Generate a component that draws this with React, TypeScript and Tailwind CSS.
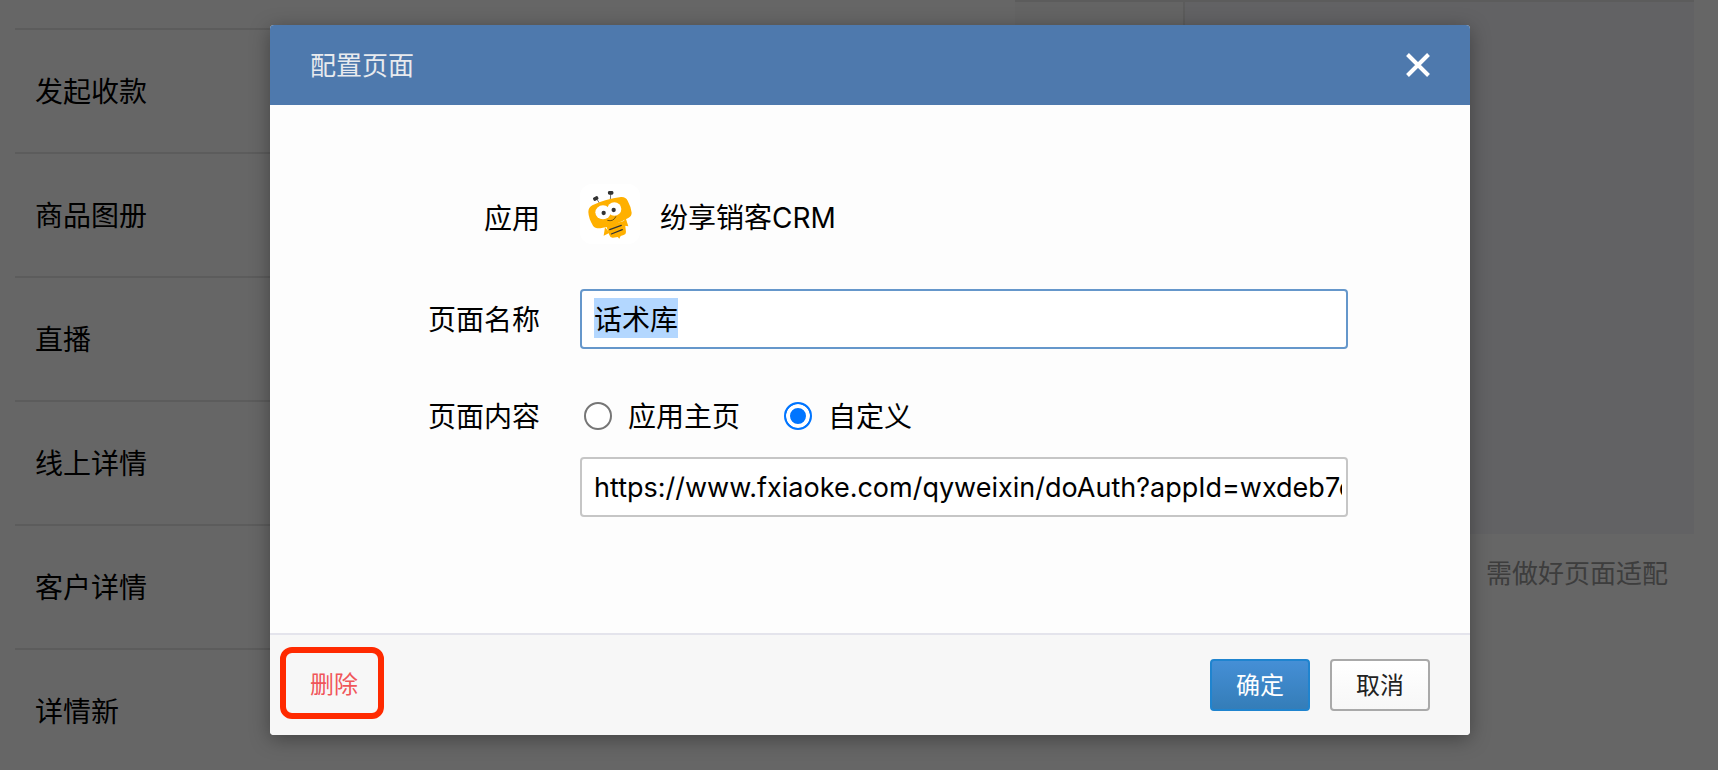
import React, { useEffect, useRef, useState } from "react";

const pages = ["发起收款", "商品图册", "直播", "线上详情", "客户详情", "详情新"];

const BeeLogo: React.FC = () => (
  <svg viewBox="15 12 180 180" className="w-15 h-15 rounded-xl bg-white" aria-hidden="true">
    <g stroke="#555" strokeWidth="2.5" fill="none">
      <path d="M66 58 L75 72" />
      <path d="M107 42 L106 60" />
    </g>
    <rect x="54" y="50" width="16" height="11" rx="4" fill="#333" transform="rotate(-28 62 55)" />
    <rect x="99" y="33" width="16" height="11" rx="4" fill="#333" />
    <path d="M90 142 L86 167 L104 158 Z" fill="#ffb000" />
    <path d="M146 124 L148 137 L160 139 L152 114 Z" fill="#ffb000" />
    <path
      d="M94 138 L149 122 L153 156 Q153 163 146 165 L137 168 L133 176 L128 171 L114 173 Q106 174 103 165 Z"
      fill="#ffb000"
    />
    <path
      d="M52 76 Q92 56 138 51 Q152 50 158 62 Q168 80 170 98 Q170 108 161 113 Q122 136 76 145 Q60 146 54 137 Q41 116 40 96 Q40 82 52 76 Z"
      fill="#ffb000"
    />
    <ellipse cx="84" cy="97" rx="23" ry="21" fill="#fff" />
    <ellipse cx="118" cy="87" rx="21" ry="20" fill="#fff" />
    <circle cx="86" cy="99" r="6.5" fill="#333" />
    <circle cx="116" cy="90" r="6.5" fill="#333" />
    <path d="M97 121 Q115 126 123 109" stroke="#4a3a10" strokeWidth="2.5" fill="none" />
    <g stroke="#333" strokeWidth="3.5" strokeLinecap="round">
      <path d="M104 149 L139 136" />
      <path d="M109 162 L142 149" />
    </g>
  </svg>
);

const App: React.FC = () => {
  const [name, setName] = useState("话术库");
  const [url, setUrl] = useState(
    "https://www.fxiaoke.com/qyweixin/doAuth?appId=wxdeb7c"
  );
  const [content, setContent] = useState("custom");
  const nameRef = useRef<HTMLInputElement>(null);

  useEffect(() => {
    nameRef.current?.focus();
    nameRef.current?.select();
  }, []);

  return (
    <div className="relative h-screen overflow-hidden bg-white text-black text-[28px] leading-9 font-['Inter','Noto_Sans_CJK_SC',sans-serif]">
      <div className="flex justify-between pl-[15px] pr-6">
        <ul className="w-1/2 pt-7">
          {pages.map((page) => (
            <li
              key={page}
              className="h-[124px] flex items-center border-t-2 border-[#e6e6e6] pl-5 pt-0.5"
            >
              {page}
            </li>
          ))}
        </ul>
        <div className="w-[679px]">
          <div className="h-[534px] flex border-t-2 border-[#e6e6e6]">
            <div className="w-[168px] bg-[#fafafa]" />
            <div className="flex-1 border-l-2 border-[#e6e6e6] bg-[#f4f6fa]" />
          </div>
          <p className="mt-[22px] pr-[26px] text-right text-[26px] text-[#999]">
            需做好页面适配
          </p>
        </div>
      </div>

      <div className="absolute inset-0 flex justify-center items-start bg-black/60 pt-[25px] pl-[22px]">
        <div
          role="dialog"
          aria-labelledby="dialog-title"
          className="w-full max-w-[1200px] rounded-sm bg-[#fdfdfd] overflow-hidden shadow-[0_4px_20px_rgba(0,0,0,0.35)]"
        >
          <header className="h-20 flex items-center justify-between bg-[#4e79ad] px-10">
            <h1 id="dialog-title" className="pt-0.5 text-[26px] text-[#e8eaee]">
              配置页面
            </h1>
            <button type="button" aria-label="关闭" className="text-white">
              <svg viewBox="0 0 24 24" className="w-6 h-6" stroke="currentColor" strokeWidth="4">
                <path d="M1.5 1.5 L22.5 22.5 M22.5 1.5 L1.5 22.5" />
              </svg>
            </button>
          </header>

          <form className="h-[528px] pt-[79px] pr-[122px]">
            <div className="flex items-center gap-10">
              <span className="w-[270px] pt-2.5 text-right">应用</span>
              <div className="flex items-center gap-5">
                <BeeLogo />
                <span className="pt-2">纷享销客CRM</span>
              </div>
            </div>

            <div className="mt-[45px] flex items-center gap-10">
              <label htmlFor="page-name" className="w-[270px] pt-0.5 text-right">
                页面名称
              </label>
              <input
                id="page-name"
                ref={nameRef}
                type="text"
                value={name}
                onChange={(e) => setName(e.target.value)}
                className="flex-1 min-w-0 h-15 px-3 pb-0.5 rounded-sm border-2 border-[#6597cb] bg-white outline-none selection:bg-[#b3d7ff] selection:text-black"
              />
            </div>

            <div className="mt-12 flex gap-10">
              <span id="content-label" className="w-[270px] pt-0.5 text-right">
                页面内容
              </span>
              <div className="flex-1 min-w-0">
                <div
                  role="radiogroup"
                  aria-labelledby="content-label"
                  className="flex gap-11 pl-1"
                >
                  <label className="flex items-center gap-4">
                    <input
                      type="radio"
                      name="content"
                      checked={content === "home"}
                      onChange={() => setContent("home")}
                      className="appearance-none w-7 h-7 rounded-full border-2 border-[#767676] bg-white checked:border-[#0075ff] checked:bg-[#0075ff] checked:shadow-[inset_0_0_0_4px_white]"
                    />
                    <span className="pt-0.5">应用主页</span>
                  </label>
                  <label className="flex items-center gap-4">
                    <input
                      type="radio"
                      name="content"
                      checked={content === "custom"}
                      onChange={() => setContent("custom")}
                      className="appearance-none w-7 h-7 rounded-full border-2 border-[#767676] bg-white checked:border-[#0075ff] checked:bg-[#0075ff] checked:shadow-[inset_0_0_0_4px_white]"
                    />
                    <span className="pt-0.5">自定义</span>
                  </label>
                </div>
                <input
                  type="text"
                  aria-label="页面链接"
                  value={url}
                  onChange={(e) => setUrl(e.target.value)}
                  className="mt-[22px] w-full h-15 pl-3 pr-1 rounded-sm border-2 border-[#c6c6c6] bg-white text-[27px] outline-none"
                />
              </div>
            </div>
          </form>

          <footer className="flex items-center justify-between h-[102px] border-t-2 border-[#e4e4ec] bg-[#f7f7f7] pl-2.5 pr-10 text-2xl">
            <button
              type="button"
              className="h-18 mb-1 pt-1 pl-6 pr-5 rounded-xl border-6 border-[#ff2a00] text-[#f0565a]"
            >
              删除
            </button>
            <div className="flex gap-5">
              <button
                type="button"
                className="w-25 h-13 pt-0.5 rounded-sm border-2 border-[#1f84cf] bg-linear-to-b from-[#458fd6] to-[#347db8] text-white"
              >
                确定
              </button>
              <button
                type="button"
                className="w-25 h-13 pt-0.5 rounded-sm border-2 border-[#a9a9a9] bg-linear-to-b from-white to-[#f7f7f7] text-[#222]"
              >
                取消
              </button>
            </div>
          </footer>
        </div>
      </div>
    </div>
  );
};

export default App;
